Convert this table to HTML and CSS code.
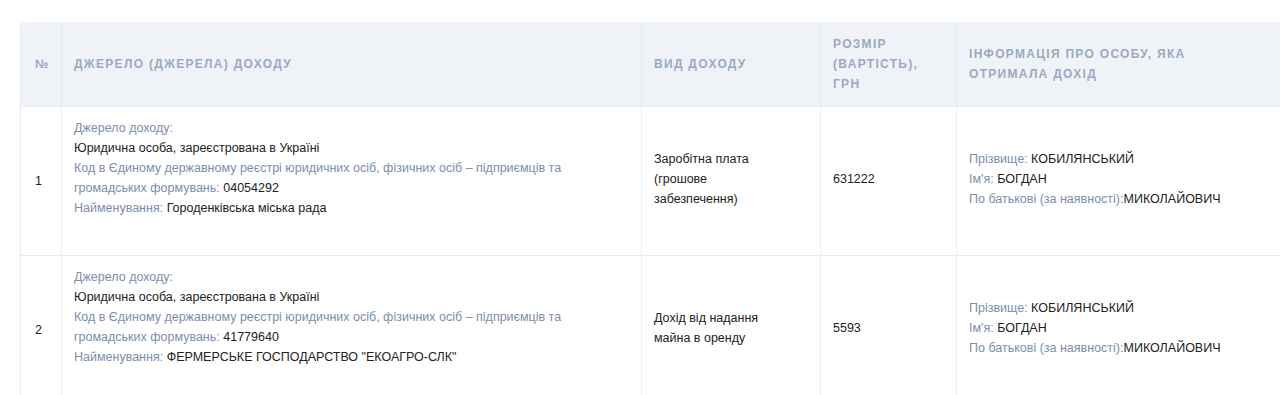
FILE: index.html
```html
<!DOCTYPE html>
<html lang="uk">
<head>
<meta charset="utf-8">
<title>Доходи</title>
<link rel="stylesheet" href="styles.css">
</head>
<body>
<div class="wrap">
<table class="income">
  <thead>
    <tr>
      <th class="c-num">№</th>
      <th class="c-src">Джерело (джерела) доходу</th>
      <th class="c-kind">Вид доходу</th>
      <th class="c-sum">Розмір (вартість), грн</th>
      <th class="c-person">Інформація про особу, яка отримала дохід</th>
    </tr>
  </thead>
  <tbody>
    <tr>
      <td class="c-num">1</td>
      <td class="c-src">
        <div class="lbl">Джерело доходу:</div>
        <div class="val">Юридична особа, зареєстрована в Україні</div>
        <div><span class="lbl">Код в Єдиному державному реєстрі юридичних осіб, фізичних осіб – підприємців та громадських формувань: </span><span class="val">04054292</span></div>
        <div><span class="lbl">Найменування: </span><span class="val">Городенківська міська рада</span></div>
      </td>
      <td class="c-kind">Заробітна плата (грошове забезпечення)</td>
      <td class="c-sum">631222</td>
      <td class="c-person">
        <div><span class="lbl">Прізвище: </span><span class="val">КОБИЛЯНСЬКИЙ</span></div>
        <div><span class="lbl">Ім'я: </span><span class="val">БОГДАН</span></div>
        <div><span class="lbl">По батькові (за наявності):</span><span class="val">МИКОЛАЙОВИЧ</span></div>
      </td>
    </tr>
    <tr>
      <td class="c-num">2</td>
      <td class="c-src">
        <div class="lbl">Джерело доходу:</div>
        <div class="val">Юридична особа, зареєстрована в Україні</div>
        <div><span class="lbl">Код в Єдиному державному реєстрі юридичних осіб, фізичних осіб – підприємців та громадських формувань: </span><span class="val">41779640</span></div>
        <div><span class="lbl">Найменування: </span><span class="val">ФЕРМЕРСЬКЕ ГОСПОДАРСТВО "ЕКОАГРО-СЛК"</span></div>
      </td>
      <td class="c-kind">Дохід від надання майна в оренду</td>
      <td class="c-sum">5593</td>
      <td class="c-person">
        <div><span class="lbl">Прізвище: </span><span class="val">КОБИЛЯНСЬКИЙ</span></div>
        <div><span class="lbl">Ім'я: </span><span class="val">БОГДАН</span></div>
        <div><span class="lbl">По батькові (за наявності):</span><span class="val">МИКОЛАЙОВИЧ</span></div>
      </td>
    </tr>
  </tbody>
</table>
</div>
</body>
</html>
```

FILE: styles.css
```css
html, body {
  margin: 0;
  padding: 0;
  overflow: hidden;
  background: #ffffff;
}
body {
  font-family: "Liberation Sans", Arial, sans-serif;
  color: #222222;
}
.wrap {
  padding: 22px 0 0 20px;
  width: 1320px;
}
.income {
  border-collapse: separate;
  border-spacing: 0;
  table-layout: fixed;
  width: 1266px;
  border-left: 1px solid #e7eaef;
  border-top: 1px solid #eef1f5;
  border-radius: 4px 0 0 0;
}
.income th {
  background: #eff3f8;
  color: #9aa9c3;
  font-size: 12px;
  font-weight: 700;
  letter-spacing: 1.3px;
  text-transform: uppercase;
  text-align: left;
  line-height: 20px;
  padding: 11px 12px 12px;
  vertical-align: middle;
  border-right: 1px solid #e3e8ee;
  border-bottom: 1px solid #e6e9ee;
}
.income th:first-child {
  border-top-left-radius: 4px;
}
.income td {
  font-size: 12.5px;
  line-height: 20px;
  padding: 12px;
  vertical-align: middle;
  border-right: 1px solid #eceef1;
  border-bottom: 1px solid #e8eaed;
  color: #222222;
}
.income th.c-num, .income td.c-num {
  padding-left: 14px;
  padding-right: 8px;
}
.income th.c-kind, .income td.c-kind {
  padding-right: 31px;
}
.income th.c-person, .income td.c-person {
  padding-right: 20px;
}
.c-num { width: 18px; }
.c-src { width: 555px; }
.c-kind { width: 135px; }
.c-sum { width: 111px; }
.c-person { width: 296px; }
.income td.c-src {
  vertical-align: top;
  padding-top: 11px;
  padding-bottom: 37px;
}
.income td.c-kind, .income td.c-sum, .income td.c-person {
  padding-bottom: 17px;
}
.lbl { color: #7c8eab; }
.val { color: #222222; }
```
